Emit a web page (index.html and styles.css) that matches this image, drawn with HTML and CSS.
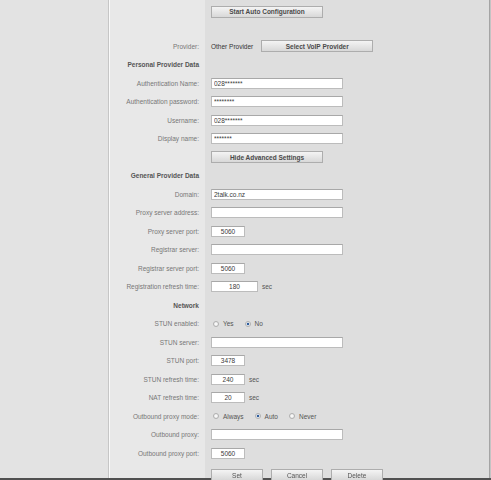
FILE: index.html
```html
<!DOCTYPE html>
<html lang="en">
<head>
  <meta charset="UTF-8">
  <title>VoIP Provider Settings</title>
  <link rel="stylesheet" href="styles.css">
</head>
<body>
  <div class="frame">
    <div class="nav"></div>

    <div class="content">
      <div class="row row-top">
        <span class="label"></span>
        <span class="value"><button class="btn wide">Start Auto Configuration</button></span>
      </div>
      <div class="spacer"></div>

      <div class="row">
        <span class="label">Provider:</span>
        <span class="value"><span class="plain">Other Provider</span><button class="btn wide provider-btn">Select VoIP Provider</button></span>
      </div>

      <!-- Personal provider data -->
      <div class="row">
        <span class="label head">Personal Provider Data</span>
        <span class="value"></span>
      </div>
      <div class="row">
        <span class="label">Authentication Name:</span>
        <span class="value"><input class="field" type="text" value="028*******"></span>
      </div>
      <div class="row">
        <span class="label">Authentication password:</span>
        <span class="value"><input class="field" type="text" value="********"></span>
      </div>
      <div class="row">
        <span class="label">Username:</span>
        <span class="value"><input class="field" type="text" value="028*******"></span>
      </div>
      <div class="row">
        <span class="label">Display name:</span>
        <span class="value"><input class="field" type="text" value="*******"></span>
      </div>
      <div class="row">
        <span class="label"></span>
        <span class="value"><button class="btn wide">Hide Advanced Settings</button></span>
      </div>

      <!-- General provider data -->
      <div class="row">
        <span class="label head">General Provider Data</span>
        <span class="value"></span>
      </div>
      <div class="row">
        <span class="label">Domain:</span>
        <span class="value"><input class="field" type="text" value="2talk.co.nz"></span>
      </div>
      <div class="row">
        <span class="label">Proxy server address:</span>
        <span class="value"><input class="field" type="text" value=""></span>
      </div>
      <div class="row">
        <span class="label">Proxy server port:</span>
        <span class="value"><input class="field port" type="text" value="5060"></span>
      </div>
      <div class="row">
        <span class="label">Registrar server:</span>
        <span class="value"><input class="field" type="text" value=""></span>
      </div>
      <div class="row">
        <span class="label">Registrar server port:</span>
        <span class="value"><input class="field port" type="text" value="5060"></span>
      </div>
      <div class="row">
        <span class="label">Registration refresh time:</span>
        <span class="value"><input class="field time" type="text" value="180"><span class="unit">sec</span></span>
      </div>

      <!-- Network -->
      <div class="row">
        <span class="label head">Network</span>
        <span class="value"></span>
      </div>
      <div class="row">
        <span class="label">STUN enabled:</span>
        <span class="value">
          <label class="opt"><input type="radio" name="stun">Yes</label>
          <label class="opt"><input type="radio" name="stun" checked>No</label>
        </span>
      </div>
      <div class="row">
        <span class="label">STUN server:</span>
        <span class="value"><input class="field" type="text" value=""></span>
      </div>
      <div class="row">
        <span class="label">STUN port:</span>
        <span class="value"><input class="field port" type="text" value="3478"></span>
      </div>
      <div class="row">
        <span class="label">STUN refresh time:</span>
        <span class="value"><input class="field port" type="text" value="240"><span class="unit">sec</span></span>
      </div>
      <div class="row">
        <span class="label">NAT refresh time:</span>
        <span class="value"><input class="field port" type="text" value="20"><span class="unit">sec</span></span>
      </div>
      <div class="row">
        <span class="label">Outbound proxy mode:</span>
        <span class="value">
          <label class="opt"><input type="radio" name="outbound">Always</label>
          <label class="opt"><input type="radio" name="outbound" checked>Auto</label>
          <label class="opt"><input type="radio" name="outbound">Never</label>
        </span>
      </div>
      <div class="row">
        <span class="label">Outbound proxy:</span>
        <span class="value"><input class="field" type="text" value=""></span>
      </div>
      <div class="row">
        <span class="label">Outbound proxy port:</span>
        <span class="value"><input class="field port" type="text" value="5060"></span>
      </div>

      <div class="row actions">
        <span class="label"></span>
        <span class="value">
          <button class="btn small">Set</button>
          <button class="btn small">Cancel</button>
          <button class="btn small">Delete</button>
        </span>
      </div>
    </div>
  </div>
  <div class="bottom-edge"></div>
</body>
</html>
```

FILE: styles.css
```css
* {
  margin: 0;
  padding: 0;
  box-sizing: border-box;
  font-family: 'Liberation Sans', Arial, sans-serif;
}

html, body {
  height: 100%;
  overflow: hidden;
}

body {
  background-color: #c4c4c4;
  font-size: 6.5px;
  color: #777;
}

.frame {
  display: flex;
  width: 490px;
  min-height: 100%;
  border-right: 1px solid #a4a4a4;
}

.nav {
  width: 109px;
  flex-shrink: 0;
  background-color: #e3e3e3;
  border-right: 1px solid #c6c6c6;
}

.content {
  flex: 1;
  border-left: 1px solid #fafafa;
  background: linear-gradient(to right, #e8e8e8 95px, #dedede 95px);
}

.row {
  display: grid;
  grid-template-columns: 95px 1fr;
  align-items: center;
  height: 18.5px;
}

.row-top {
  height: 23px;
}

.spacer {
  height: 13.75px;
}

.label {
  text-align: right;
  padding-right: 6px;
  white-space: nowrap;
}

.label.head {
  font-weight: bold;
  color: #555;
}

.value {
  display: flex;
  align-items: center;
  padding-left: 6px;
  white-space: nowrap;
}

.plain {
  color: #333;
}

.btn {
  height: 12px;
  border: 1px solid #adadad;
  background: linear-gradient(#f4f4f4, #d8d8d8);
  color: #4a4a4a;
  font-size: 6.5px;
  font-weight: bold;
  cursor: pointer;
}

.btn.wide {
  width: 112px;
}

.provider-btn {
  margin-left: 8px;
}

.field {
  width: 132px;
  height: 11px;
  border: 1px solid #bcbcbc;
  border-top-color: #a8a8a8;
  background-color: #fff;
  color: #3a3a3a;
  font-size: 6.5px;
  padding: 0 2px;
  outline: none;
}

.field.port {
  width: 34px;
  text-align: center;
}

.field.time {
  width: 47px;
  text-align: center;
}

.unit {
  margin-left: 4px;
  color: #555;
}

.opt {
  display: flex;
  align-items: center;
  margin-right: 9px;
  color: #555;
}

.opt input {
  appearance: none;
  width: 6px;
  height: 6px;
  margin: 0 4px 0 2px;
  border: 1px solid #b0b0b0;
  border-radius: 50%;
  background: radial-gradient(#ffffff, #e4e4e4);
}

.opt input:checked {
  background: radial-gradient(#2f5d9c 35%, #cfd9e6 50%, #ffffff 80%);
}

.actions {
  align-items: start;
  padding-top: 7px;
  height: 30px;
  position: relative;
  z-index: 1;
}

.actions .btn {
  margin-right: 8px;
}

.btn.small {
  width: 52px;
  font-weight: normal;
  color: #555;
}

.bottom-edge {
  position: fixed;
  left: 0;
  right: 0;
  top: 478px;
  height: 2px;
  background-color: #505050;
}
```
